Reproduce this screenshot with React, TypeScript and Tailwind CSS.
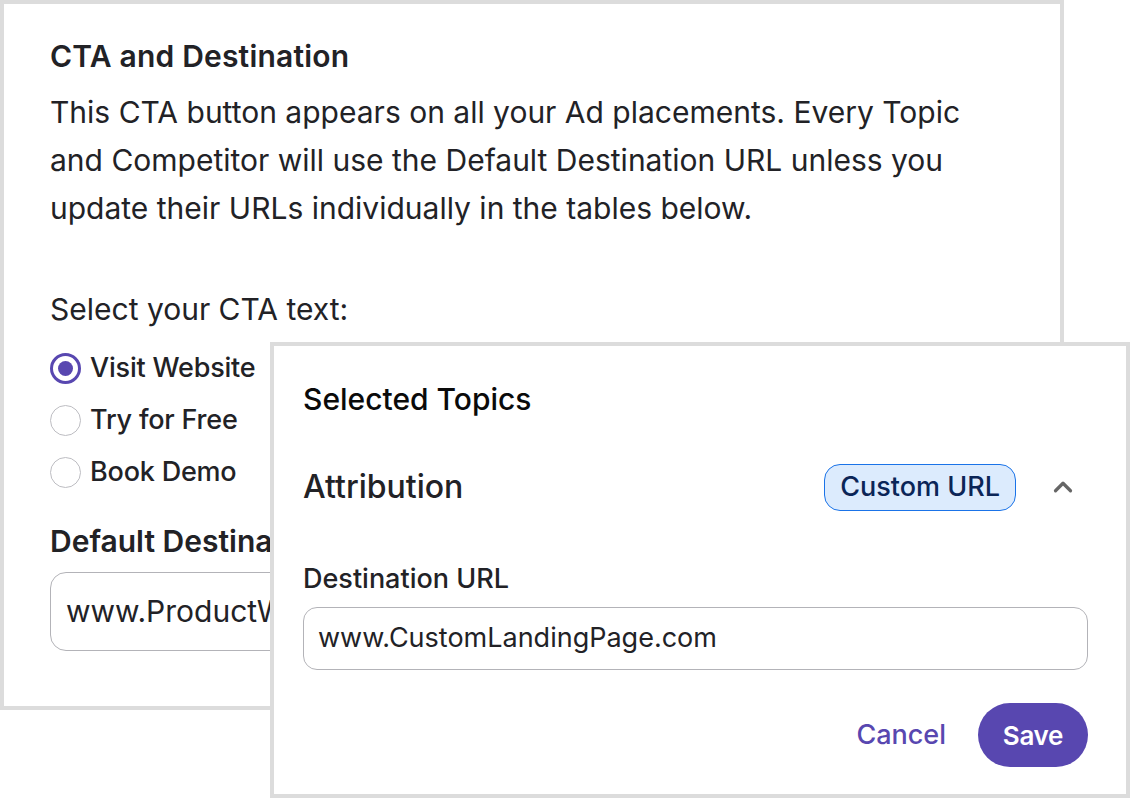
import { ChevronUp } from "lucide-react";

const options = ["Visit Website", "Try for Free", "Book Demo"];

export default function App() {
  return (
    <div className="relative h-[798px] w-[1130px] overflow-hidden bg-white font-['Inter',sans-serif] text-[#222226]">
      {/* CTA card */}
      <section className="h-[710px] w-[1064px] border-4 border-[#dcdcdc] bg-white px-[46px] pt-[33px]">
        <h2 className="text-[30px] font-semibold leading-[38px] tracking-[0.2px]">CTA and Destination</h2>
        <p className="mt-[13px] text-[30px] leading-[48px]">
          This CTA button appears on all your Ad placements. Every Topic
          <br />
          and Competitor will use the Default Destination URL unless you
          <br />
          update their URLs individually in the tables below.
        </p>
        <p className="mt-[57px] text-[30px] leading-[40px]">Select your CTA text:</p>
        <div className="mt-[23px] flex flex-col gap-[20px]">
          {options.map((o, i) => (
            <label key={o} className="flex h-[32px] items-center gap-[9px]">
              {i === 0 ? (
                <span className="flex h-[31px] w-[31px] items-center justify-center rounded-full border-[3px] border-[#5847b0]">
                  <span className="h-[15px] w-[15px] rounded-full bg-[#5847b0]" />
                </span>
              ) : (
                <span className="h-[31px] w-[31px] rounded-full border border-[#bdbdc2]" />
              )}
              <span className="text-[27px] font-medium tracking-[-0.2px]">{o}</span>
            </label>
          ))}
        </div>
        <h3 className="mt-[33px] text-[30px] font-semibold leading-[40px]">Default Destination URL</h3>
        <div className="mt-[11px] flex h-[79px] w-[600px] items-center rounded-[16px] border border-[#b3b3b8] px-[15px] text-[30px]">
          www.ProductWebsite.com
        </div>
      </section>

      {/* Selected topics popover */}
      <section className="absolute left-[270px] top-[342px] flex h-[456px] w-[860px] flex-col border-4 border-[#dcdcdc] bg-white pl-[29px] pr-[38px] pt-[33px]">
        <h2 className="text-[30px] font-medium leading-[40px] text-[#0a0a0a]">Selected Topics</h2>
        <div className="mt-[44px] flex h-[48px] items-center">
          <span className="flex-1 text-[32px] font-medium">Attribution</span>
          <span className="flex h-[47px] items-center rounded-[16px] border border-[#1a73e8] bg-[#dcebfd] px-[15px] text-[27px] font-medium text-[#0b2557]">
            Custom URL
          </span>
          <ChevronUp className="ml-[32px] mr-[10px] h-[30px] w-[30px] text-[#666]" strokeWidth={2.6} />
        </div>
        <label className="mt-[50px] text-[27px] font-medium leading-[36px]">Destination URL</label>
        <div className="mt-[10px] flex h-[63px] items-center rounded-[14px] border border-[#b3b3b8] px-[14px] text-[27px]">
          www.CustomLandingPage.com
        </div>
        <div className="mt-[33px] flex items-center justify-end gap-[32px]">
          <button className="text-[27px] font-medium text-[#5847b0]">Cancel</button>
          <button className="h-[64px] w-[110px] rounded-full bg-[#5847b0] text-[26px] font-semibold tracking-[-0.3px] text-white">
            Save
          </button>
        </div>
      </section>
    </div>
  );
}
